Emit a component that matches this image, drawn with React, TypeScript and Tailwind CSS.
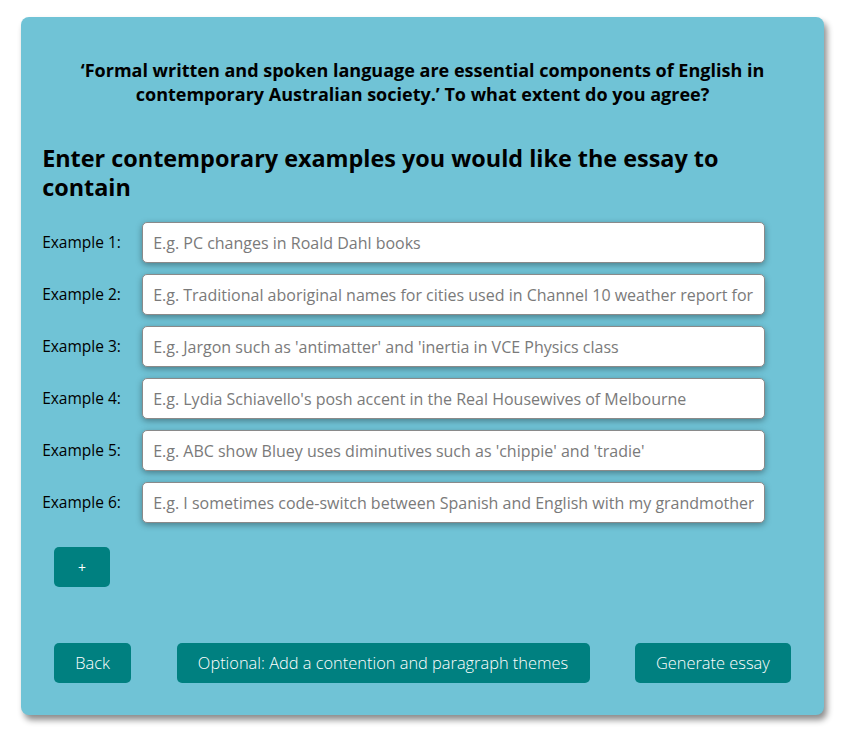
import { useState } from "react";

const placeholders = [
  "E.g. PC changes in Roald Dahl books",
  "E.g. Traditional aboriginal names for cities used in Channel 10 weather report for NSW",
  "E.g. Jargon such as 'antimatter' and 'inertia in VCE Physics class",
  "E.g. Lydia Schiavello's posh accent in the Real Housewives of Melbourne",
  "E.g. ABC show Bluey uses diminutives such as 'chippie' and 'tradie'",
  "E.g. I sometimes code-switch between Spanish and English with my grandmother",
];

export default function App() {
  const [values, setValues] = useState<string[]>(placeholders.map(() => ""));

  return (
    <div className="min-h-[736px] bg-white pt-[17px] font-['Open_Sans',sans-serif] text-black">
      <div className="mx-auto w-[95%] rounded-lg bg-[#70c3d6] px-[21px] pb-[20px] pt-[41px] shadow-[3px_5px_6px_rgba(0,0,0,0.45)]">
        <h2 className="mx-auto max-w-[720px] text-center text-[18px] font-bold leading-[24px]">
          ‘Formal written and spoken language are essential components of English in contemporary
          Australian society.’ To what extent do you agree?
        </h2>

        <h1 className="mt-[38px] text-[23.4px] font-bold leading-[29px]">
          Enter contemporary examples you would like the essay to contain
        </h1>

        <div className="mt-[20px] flex flex-col gap-[11px]">
          {values.map((v, i) => (
            <div key={i} className="flex items-center">
              <label className="w-[100px] shrink-0 text-[15.5px]">Example {i + 1}:</label>
              <input
                value={v}
                onChange={(e) => {
                  const next = [...values];
                  next[i] = e.target.value;
                  setValues(next);
                }}
                placeholder={placeholders[i]}
                className="h-[41px] w-[623px] rounded-[5px] border border-[#8a8a8a] bg-white px-[10px] text-[16px] text-black shadow-[0_2px_6px_rgba(0,0,0,0.35)] outline-none placeholder:text-[#7a7a7a]"
              />
            </div>
          ))}
        </div>

        <div className="mt-[12px]">
          <button
            type="button"
            className="m-3 h-[40px] w-[56px] rounded-[5px] bg-[#008080] text-[14px] text-white"
          >
            +
          </button>
        </div>

        <div className="mt-[32px] flex justify-between">
          <button type="button" className="m-3 h-[40px] w-[77px] rounded-[5px] bg-[#008080] text-[16.4px] font-light text-white">
            Back
          </button>
          <button type="button" className="m-3 h-[40px] w-[413px] rounded-[5px] bg-[#008080] text-[16.4px] font-light text-white">
            Optional: Add a contention and paragraph themes
          </button>
          <button type="button" className="m-3 h-[40px] w-[156px] rounded-[5px] bg-[#008080] text-[16.4px] font-light text-white">
            Generate essay
          </button>
        </div>
      </div>
    </div>
  );
}
